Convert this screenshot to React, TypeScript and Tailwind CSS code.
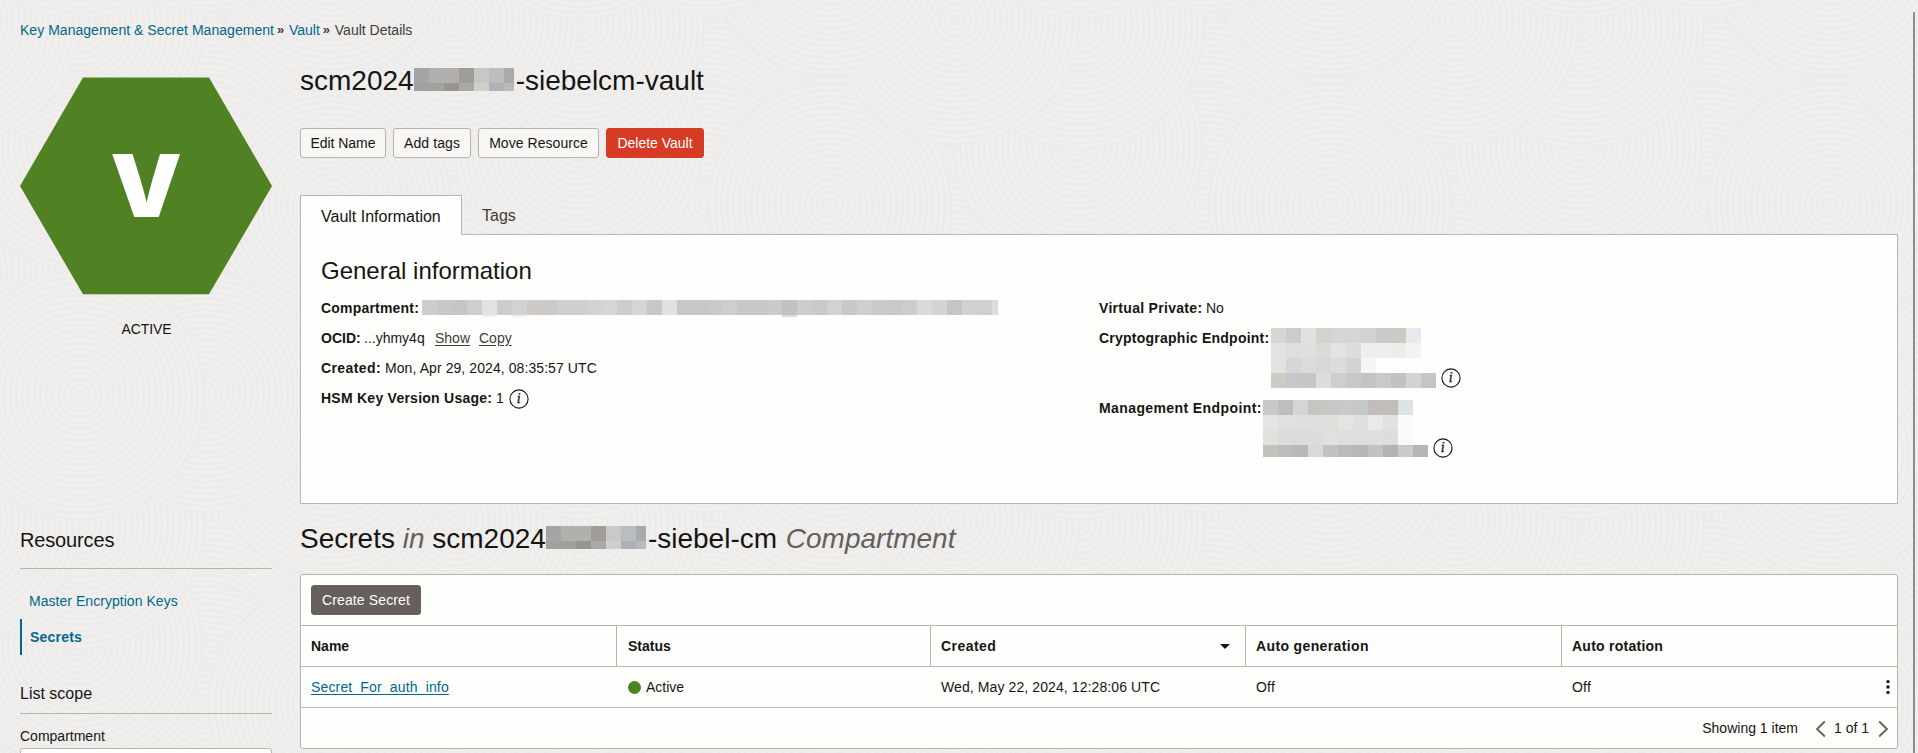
import type { ReactNode } from 'react';

const TITLE_BLUR = [
  ['#a5a4a2', '#b1b0ae', '#b1b0ae', '#a09d98', '#c7c7c5', '#bbbebe', '#a9aaa9'],
  ['#a2a19f', '#a2a19f', '#98948f', '#aaa9a7', '#cfcec9', '#afb2b6', '#b9b9b8'],
];
const HEADING_BLUR = [
  ['#a5a4a2', '#b1b0ae', '#b1b0ae', '#a09d98', '#c9c9c7', '#b9bcc0', '#a9aaa9'],
  ['#a2a19d', '#a09f9b', '#96958f', '#aaa9a7', '#cfcfcc', '#abb1b6', '#b9b9b8'],
];
const COMPARTMENT_BLUR = [
  [
    '#d0cccc', '#c9c8c8', '#c6c4c6', '#cccfcc', '#e2e3e1', '#cccccb', '#d2d4d1', '#cdcac8', '#cacace', '#cfcfd0',
    '#cfcfcf', '#d3d3d2', '#d6d6d6', '#cecdcc', '#d5d5d3', '#c7c7c7', '#e1e1df', '#c8c7c6', '#c8c7c6', '#cbcac9',
    '#cecece', '#c9c7c8', '#c9c8c8', '#cbcacc', '#c2c2c0', '#cdcdcc', '#cac9c8', '#d2d2d2', '#c9c8c8', '#cfcfcf',
    '#cacacb', '#c9c9ca', '#cecdcb', '#dadada', '#d5d4d3', '#c5c5c5', '#d1d1d1', '#d0d0d0', '#dcdcdc',
  ],
  [
    '', '', '', '', '#f0f0ee', '', '#f0f0ee', '', '', '', '', '', '', '', '', '', '', '', '', '', '', '', '', '',
    '#dcdcda',
  ],
];
const CRYPTO_BLUR = [
  ['#d6d7d3', '#cdcbcb', '#dfe2e1', '#d6d1cc', '#d4d5d4', '#d4d5d4', '#d2d4d3', '#cbc9c8', '#cccac7', '#e6eaed'],
  ['#e3e2e0', '#dededd', '#dfdfe0', '#dadad9', '#e3e3e2', '#dddddf', '#eeeeed', '#eeeeed', '#ececeb', '#f3f3f2'],
  ['#e3e2e0', '#d6d6d5', '#dbdbda', '#d7d7d9', '#dddcdb', '#d3d3d5', '#f5f5f4'],
  ['#cecac8', '#c6c7ca', '#c6c6c7', '#dddddc', '#cececd', '#c8c8c7', '#c3c3c1', '#cacac9', '#c2c2c3', '#d3d3d2', '#c5c5c4'],
];
const MANAGEMENT_BLUR = [
  ['#c8c9c6', '#bfbebd', '#d3d6d5', '#c9c5bf', '#c5c8c5', '#c8c9c8', '#c6c9c8', '#c0bcbb', '#c0beba', '#dde2e4'],
  ['#e4e4e2', '#dfe0e1', '#dedfe1', '#dededd', '#dfdfde', '#e5e4e1', '#dde0e1', '#e9e9ea', '#e2e1e0', '#fafaf9'],
  ['#e0e0df', '#dcdcdc', '#dadbdd', '#dcdcdb', '#e0e0df', '#dededd', '#dfdedc', '#dfdfde', '#dddddc', '#fafaf9'],
  ['#c5c2bd', '#b9bdbc', '#b7b9b9', '#d8d9d8', '#c2c3c1', '#babab9', '#b7b7b6', '#c2c3c1', '#b3b3b7', '#cacac9', '#b5b6b5'],
];

function Mosaic({
  cells,
  heights,
  width,
  className = '',
}: {
  cells: string[][];
  heights: number[];
  width: number;
  className?: string;
}) {
  return (
    <div className={`flex shrink-0 flex-col overflow-hidden ${className}`} style={{ width }}>
      {cells.map((row, r) => (
        <div key={r} className="flex" style={{ height: heights[r] }}>
          {row.map((color, c) => (
            <div key={c} className="w-[15px] shrink-0" style={{ backgroundColor: color || 'transparent' }} />
          ))}
        </div>
      ))}
    </div>
  );
}

const DISCS = [
  [205, 270, 125],
  [455, 270, 125],
  [330, 330, 125],
  [455, 395, 125],
  [330, 20, 125],
  [205, 145, 125],
  [205, 205, 120],
  [330, 205, 122],
  [78, 145, 125],
  [80, 25, 125],
  [455, 20, 125],
  [330, 455, 122],
  [205, 393, 120],
  [80, 395, 125],
];
const RADII = [0, 6, 12, 18, 24, 30, 36, 42, 48, 54, 60, 66, 72, 78, 84, 90, 96, 102, 108, 114, 120];

function Backdrop() {
  return (
    <svg className="absolute inset-0 h-full w-full" aria-hidden="true">
      <defs>
        <pattern id="rings" width="500" height="500" patternUnits="userSpaceOnUse">
          <rect width="500" height="500" fill="#f0efed" />
          {DISCS.map(([cx, cy, r], i) =>
            [-500, 0, 500].map((dx) =>
              [-500, 0, 500].map((dy) => (
                <g key={`${i}${dx}${dy}`} fill="none" stroke="#ecebe9" strokeWidth="2">
                  <circle cx={cx + dx} cy={cy + dy} r={r} fill="#f0efed" stroke="none" />
                  {RADII.map((o) => r - o > 2 && <circle key={o} cx={cx + dx} cy={cy + dy} r={r - o - 1} />)}
                </g>
              )),
            ),
          )}
        </pattern>
      </defs>
      <rect width="100%" height="100%" fill="url(#rings)" />
    </svg>
  );
}

function InfoIcon({ className = '' }: { className?: string }) {
  return (
    <svg viewBox="0 0 20 20" className={`h-5 w-5 shrink-0 ${className}`}>
      <circle cx="10" cy="10" r="9.1" fill="none" stroke="#161513" strokeWidth="1.1" />
      <text x="7.8" y="14.2" fontSize="14" fontStyle="italic" fontFamily="Liberation Serif, serif" fill="#161513" stroke="#161513" strokeWidth="0.3">
        i
      </text>
    </svg>
  );
}

function ActionButton({ className, children }: { className: string; children: ReactNode }) {
  return (
    <button
      className={`flex h-[30px] items-center justify-center rounded-[3px] border whitespace-nowrap ${className}`}
    >
      {children}
    </button>
  );
}

function Sidebar() {
  return (
    <aside className="flex w-[252px] shrink-0 flex-col">
      <svg viewBox="0 0 252 218" className="mt-[37px] h-[218px] w-[252px] shrink-0">
        <polygon points="63,0.5 189,0.5 252,109 189,217.3 63,217.3 0,109" fill="#508223" />
        <text transform="translate(126.2 140) scale(1.045 1)" textAnchor="middle" fontFamily="Inter, sans-serif" fontWeight="900" fontSize="86.5" fill="#fff">
          V
        </text>
      </svg>
      <div className="mt-6 pl-px text-center leading-5 tracking-[-0.1px]">ACTIVE</div>
      <h2 className="mt-[189px] border-b border-[#b9b3ae] pb-4 text-[20px] leading-6 tracking-[-0.15px]">Resources</h2>
      <nav className="mt-[14px] text-[#00688c]">
        <div className="pl-[9px] leading-9 tracking-[0.04px]">Master Encryption Keys</div>
        <div className="border-l-2 border-[#00688c] pl-2 leading-9 font-bold tracking-[0.2px]">Secrets</div>
      </nav>
      <h3 className="mt-[29px] border-b border-[#b9b3ae] pb-[9px] text-[16px] leading-5">List scope</h3>
      <div className="mt-3 leading-5">Compartment</div>
      <div className="mt-[2px] h-8 shrink-0 rounded-[3px] border border-[#b9b3ae] bg-[#fefefc]" />
    </aside>
  );
}

function GeneralInformation() {
  return (
    <section className="h-[270px] border border-[#b9b6b2] bg-[#fefefc] pt-[22px] pl-5">
      <h2 className="text-[24px] leading-7">General information</h2>
      <div className="mt-2 grid grid-cols-[778px_1fr] leading-[30px]">
        <div>
          <div className="flex h-[30px]">
            <b className="w-[101px] tracking-[0.2px]">Compartment:</b>
            <Mosaic cells={COMPARTMENT_BLUR} heights={[15, 2]} width={576} className="mt-[7px]" />
          </div>
          <div className="flex h-[30px]">
            <b className="w-[43px]">OCID:</b>
            <span className="w-[71px]">...yhmy4q</span>
            <span className="w-11 text-[#403c38] underline underline-offset-2">Show</span>
            <span className="text-[#403c38] underline underline-offset-2">Copy</span>
          </div>
          <div className="flex h-[30px]">
            <b className="w-16 tracking-[0.4px]">Created:</b>
            <span className="tracking-[0.08px]">Mon, Apr 29, 2024, 08:35:57 UTC</span>
          </div>
          <div className="flex h-[30px]">
            <b className="w-[175px] tracking-[0.25px]">HSM Key Version Usage:</b>
            <span>1</span>
            <InfoIcon className="mt-[6px] ml-[5px]" />
          </div>
        </div>
        <div>
          <div className="flex h-[30px]">
            <b className="w-[107px] tracking-[0.3px]">Virtual Private:</b>
            <span>No</span>
          </div>
          <div className="flex h-[70px]">
            <b className="w-[172px] tracking-[0.24px]">Cryptographic Endpoint:</b>
            <Mosaic cells={CRYPTO_BLUR} heights={[15, 15, 15, 15]} width={165} className="mt-[5px]" />
            <InfoIcon className="mt-[45px] ml-[5px]" />
          </div>
          <div className="flex h-[70px]">
            <b className="w-[164px] tracking-[0.4px]">Management Endpoint:</b>
            <Mosaic cells={MANAGEMENT_BLUR} heights={[15, 15, 15, 12]} width={165} className="mt-[7px]" />
            <InfoIcon className="mt-[45px] ml-[5px]" />
          </div>
        </div>
      </div>
    </section>
  );
}

function SecretsTable() {
  return (
    <section className="mt-[19px] flex h-[175px] shrink-0 flex-col rounded-[3px] border border-[#b9b3ae] bg-[#fefefc]">
      <div className="p-[10px]">
        <ActionButton className="w-[110px] border-[#665f5b] bg-[#665f5b] tracking-[0.13px] text-white">
          Create Secret
        </ActionButton>
      </div>
      <div className="grid h-[41px] grid-cols-[316px_314px_315px_316px_1fr] border-t border-[#b9b6b2] leading-10 font-bold">
        <div className="border-r border-[#b9b3ae] pl-[10px]">Name</div>
        <div className="border-r border-[#b9b3ae] pl-[11px]">Status</div>
        <div className="flex items-center justify-between border-r border-[#b9b3ae] pr-[15px] pl-[10px] tracking-[0.45px]">
          Created
          <svg viewBox="0 0 10 5" className="h-[5px] w-[10px]">
            <path d="M0 0h10L5 5z" fill="#161513" />
          </svg>
        </div>
        <div className="border-r border-[#b9b3ae] pl-[10px] tracking-[0.37px]">Auto generation</div>
        <div className="pl-[10px] tracking-[0.25px]">Auto rotation</div>
      </div>
      <div className="grid h-[41px] grid-cols-[316px_314px_315px_316px_1fr] border-t border-[#b9b6b2] leading-10">
        <div className="pl-[10px] tracking-[0.16px] text-[#00688c] underline underline-offset-2 [text-decoration-skip-ink:none]">
          Secret_For_auth_info
        </div>
        <div className="flex items-center gap-[5px] pl-[11px]">
          <span className="h-[13px] w-[13px] rounded-full bg-[#508223]" />
          Active
        </div>
        <div className="pl-[10px] tracking-[0.1px]">Wed, May 22, 2024, 12:28:06 UTC</div>
        <div className="pl-[10px] tracking-[0.2px]">Off</div>
        <div className="flex items-center justify-between pr-[7px] pl-[10px] tracking-[0.2px]">
          Off
          <svg viewBox="0 0 4 16" className="h-4 w-1" fill="#161513">
            <circle cx="2" cy="2.6" r="1.7" />
            <circle cx="2" cy="8" r="1.7" />
            <circle cx="2" cy="13.4" r="1.7" />
          </svg>
        </div>
      </div>
      <div className="flex h-[41px] items-center justify-end border-t border-[#b9b6b2] pr-2 leading-10">
        <span className="mr-[17px]">Showing 1 item</span>
        <svg viewBox="0 0 11 18" className="mt-px mr-2 h-[18px] w-[11px]" fill="none" stroke="#665f5b" strokeWidth="1.8">
          <path d="M9.8 1.5 2 9l7.8 7.5" />
        </svg>
        <span className="mr-[9px]">1 of 1</span>
        <svg viewBox="0 0 11 18" className="mt-px h-[18px] w-[11px]" fill="none" stroke="#665f5b" strokeWidth="1.8">
          <path d="M1.2 1.5 9 9l-7.8 7.5" />
        </svg>
      </div>
    </section>
  );
}

export default function App() {
  return (
    <div className="relative h-[753px] w-full overflow-hidden bg-[#f0efed] font-['Liberation_Sans',Arial,sans-serif] text-[14px] text-[#161513]">
      <Backdrop />
      <div className="absolute top-3 right-[3px] bottom-0 w-[2px] bg-[#8d8d8d]" />
      <div className="relative flex h-full flex-col pt-5">
        <div className="flex h-5 shrink-0 items-center pl-5 leading-5 whitespace-nowrap">
          <span className="tracking-[0.03px] text-[#00688c]">Key Management &amp; Secret Management</span>
          <span className="w-[15px] pl-[3px] text-[13px] font-bold text-[#403c38]">»</span>
          <span className="text-[#00688c]">Vault</span>
          <span className="w-[15px] pl-[3px] text-[13px] font-bold text-[#403c38]">»</span>
          <span className="text-[#403c38]">Vault Details</span>
        </div>
        <div className="flex min-h-0 flex-1 gap-7 pl-5">
          <Sidebar />
          <main className="flex w-[1598px] shrink-0 flex-col">
            <h1 className="mt-[25px] flex h-8 shrink-0 text-[28px] leading-8">
              scm2024
              <Mosaic cells={TITLE_BLUR} heights={[15, 8]} width={100} className="mt-[3px] mr-[2px]" />
              -siebelcm-vault
            </h1>
            <div className="mt-[31px] flex shrink-0 gap-[7px]">
              <ActionButton className="w-[86px] border-[#b9b3ae] bg-[#f8f7f5] tracking-[-0.05px]">Edit Name</ActionButton>
              <ActionButton className="w-[78px] border-[#b9b3ae] bg-[#f8f7f5] tracking-[0.1px]">Add tags</ActionButton>
              <ActionButton className="w-[121px] border-[#b9b3ae] bg-[#f8f7f5] tracking-[0.05px]">Move Resource</ActionButton>
              <ActionButton className="w-[98px] border-[#d63b25] bg-[#d63b25] text-white">Delete Vault</ActionButton>
            </div>
            <div className="relative mt-[37px] -mb-px flex h-10 shrink-0 text-[16px] leading-5">
              <div className="w-[162px] border border-b-0 border-[#b9b6b2] bg-[#fefefc] pt-[11px] pl-5">
                Vault Information
              </div>
              <div className="pt-[11px] pl-5 text-[#403c38]">Tags</div>
            </div>
            <GeneralInformation />
            <h2 className="mt-[19px] flex h-8 shrink-0 text-[28px] leading-8 whitespace-pre">
              {'Secrets '}
              <i className="text-[#665f5b]">{'in '}</i>
              scm2024
              <Mosaic cells={HEADING_BLUR} heights={[15, 8]} width={100} className="mt-[3px] mr-[2px]" />
              {'-siebel-cm '}
              <i className="pl-px text-[#665f5b]">Compartment</i>
            </h2>
            <SecretsTable />
          </main>
        </div>
      </div>
    </div>
  );
}
